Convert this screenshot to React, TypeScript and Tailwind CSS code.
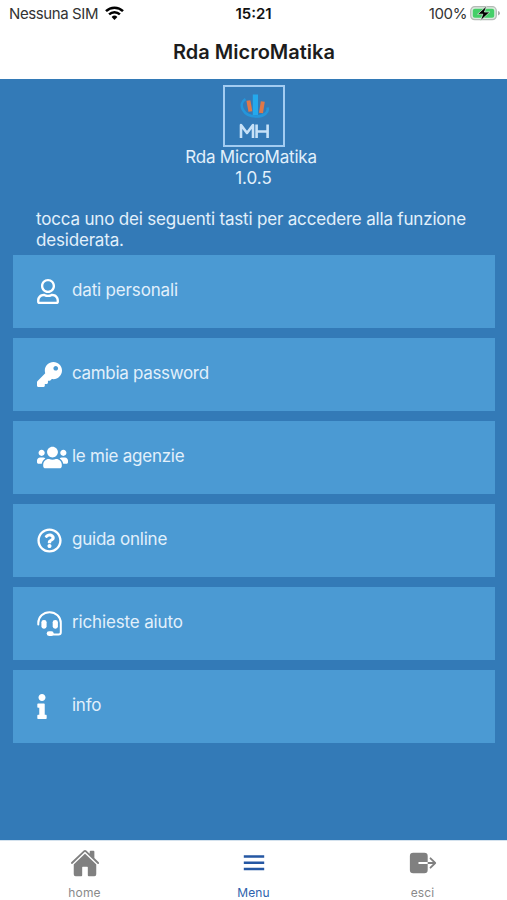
import type { ReactNode } from "react";
import { FaRegUser, FaKey, FaUsers, FaRegQuestionCircle, FaInfo } from "react-icons/fa";
import { IoHome, IoExit } from "react-icons/io5";

function HeadsetIcon() {
  return (
    <svg viewBox="0 0 25 25" className="h-[25px] w-[25px]" fill="none" stroke="currentColor">
      <path d="M1.3 13.5V12A11.2 10.8 0 0 1 23.8 12V21.2Q23.8 23.4 21.5 23.4H13" strokeWidth="2" strokeLinecap="round" />
      <rect x="4.4" y="8.9" width="5.2" height="8.8" rx="2.4" fill="currentColor" stroke="none" />
      <rect x="15.7" y="8.9" width="5.2" height="8.8" rx="2.4" fill="currentColor" stroke="none" />
      <rect x="9.7" y="20.2" width="7" height="4.7" rx="2.3" fill="currentColor" stroke="none" />
    </svg>
  );
}

function Logo() {
  return (
    <div className="h-[62px] w-[62px] border-2 border-[#a2ccf1]">
      <svg viewBox="0 0 58 58" className="h-full w-full" fill="none">
        <path d="M20.5 12.2C12.5 17 18 29.3 31 29.5C39 29.5 44 25.5 42.5 20.5" stroke="#2496db" strokeWidth="2.6" />
        <path d="M23.4 13.5L25.4 24.5" stroke="#e07849" strokeWidth="4" />
        <path d="M30.4 7.5V28" stroke="#24a9ed" strokeWidth="5.2" />
        <path d="M37.8 14.5L36 26" stroke="#e07849" strokeWidth="4" />
        <path d="M16 51V38L22 46L28 38V51M31.6 37.5V51M42.6 37.5V51M31.5 44.5H43" stroke="#c6e1f7" strokeWidth="2.6" strokeLinejoin="round" />
      </svg>
    </div>
  );
}

const items: { label: string; icon: ReactNode; text: string }[] = [
  { label: "dati personali", icon: <FaRegUser className="h-[25px] w-[22px]" />, text: "tracking-[-0.16px]" },
  { label: "cambia password", icon: <FaKey className="h-[25px] w-[25px]" />, text: "tracking-[-0.32px]" },
  { label: "le mie agenzie", icon: <FaUsers className="h-[25px] w-[31px]" />, text: "tracking-[-0.25px]" },
  { label: "guida online", icon: <FaRegQuestionCircle className="h-[25px] w-[25px]" />, text: "tracking-[-0.22px]" },
  { label: "richieste aiuto", icon: <HeadsetIcon />, text: "tracking-[-0.15px]" },
  { label: "info", icon: <FaInfo className="h-[25px] w-[10px]" />, text: "tracking-[-0.25px]" },
];

export default function App() {
  return (
    <div className="flex h-[900px] w-[507px] flex-col overflow-hidden bg-white font-['Inter',sans-serif] text-[#1c1c1c]">
      <header className="h-[79px] shrink-0">
        <div className="grid h-[28px] grid-cols-3 items-center pr-[6px] pl-[9px] text-[15px] leading-[28px]">
          <div className="flex items-center gap-[6.5px] whitespace-nowrap text-[#333]">
            <span className="tracking-[-0.4px]">Nessuna SIM</span>
            <svg viewBox="0 0 19 14" className="h-[14px] w-[19px] -translate-y-px" fill="none" stroke="#000" strokeWidth="2.5">
              <path d="M1 5.2A12.2 12.2 0 0 1 18 5.2" />
              <path d="M4.1 8.4A7.8 7.8 0 0 1 14.9 8.4" />
              <path d="M6.6 10.9A4.2 4.2 0 0 1 12.4 10.9L9.5 13.9Z" fill="#000" stroke="none" />
            </svg>
          </div>
          <div className="pr-[3px] text-center font-semibold text-[#111]">15:21</div>
          <div className="flex items-center justify-end gap-[3px] text-[#333]">
            <span className="tracking-[-0.4px]">100%</span>
            <svg viewBox="0 0 31 16" className="h-[16px] w-[31px] -translate-y-px">
              <rect x="0.7" y="1.7" width="25.6" height="13" rx="4" fill="#d9eadd" stroke="#b4bab6" strokeWidth="1.2" />
              <rect x="2.8" y="3.8" width="21.4" height="8.9" rx="2" fill="#44cf68" />
              <path d="M28 6V10.5Q30 9.8 30 8.2T28 6Z" fill="#a9aeab" />
              <path d="M16.8 0.8L7.6 9.2H12.8L10.4 15.8L19.8 7H14.4Z" fill="#000" stroke="#e8f5ea" strokeWidth="0.7" />
            </svg>
          </div>
        </div>
        <h1 className="pl-px text-center text-[20px] leading-[49px] font-semibold">Rda MicroMatika</h1>
      </header>

      <main className="flex h-[761px] shrink-0 flex-col bg-[#337ab7] pt-[6px] text-[#e2f0fb]">
        <div className="flex flex-col items-center text-[17px] leading-[21px]">
          <Logo />
          <div className="pr-[5px] tracking-[-0.18px]">Rda MicroMatika</div>
          <div>1.0.5</div>
        </div>
        <p className="mt-[20px] pl-[36px] text-[17px] leading-[21px] tracking-[-0.18px] whitespace-nowrap">
          tocca uno dei seguenti tasti per accedere alla funzione
          <br />
          desiderata.
        </p>
        <nav className="mt-[4px] flex flex-col gap-[10px] pr-[12px] pl-[13px]">
          {items.map((item) => (
            <button key={item.label} className="flex h-[73px] w-full items-center bg-[#4b9ad3] pl-[24px] text-left">
              <span className="flex w-[35px] shrink-0 text-white">{item.icon}</span>
              <span className={`-mt-[2px] text-[17px] leading-[25px] whitespace-nowrap ${item.text}`}>{item.label}</span>
            </button>
          ))}
        </nav>
      </main>

      <footer className="grid h-[60px] grid-cols-3 border-t border-[#d4e2ee] text-[12px] tracking-[0.15px] text-[#8a8a8a]">
        <div className="flex flex-col items-center">
          <IoHome className="mt-[7px] h-[30px] w-[30px] text-[#808080]" />
          <span className="mt-[7px] leading-[16px]">home</span>
        </div>
        <div className="flex flex-col items-center text-[#2e62ad]">
          <svg viewBox="0 0 30 30" className="mt-[7px] h-[30px] w-[30px]" stroke="#2557a3" strokeWidth="2.6">
            <path d="M4.8 8.5H25.2M4.8 14.8H25.2M4.8 21H25.2" />
          </svg>
          <span className="mt-[7px] leading-[16px]">Menu</span>
        </div>
        <div className="flex flex-col items-center">
          <IoExit className="mt-[7px] h-[30px] w-[30px] text-[#808080]" />
          <span className="mt-[7px] leading-[16px]">esci</span>
        </div>
      </footer>
    </div>
  );
}
